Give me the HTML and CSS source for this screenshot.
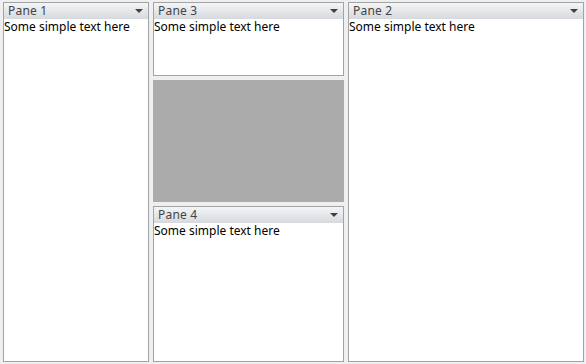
FILE: index.html
```html
<!DOCTYPE html>
<html lang="en">
<head>
    <title>Panes</title>
    <link rel="stylesheet" href="styles.css">
</head>
<body>

<div class="dock">
    <div class="pane pane-left">
        <div class="pane-header">
            <span>Pane 1</span>
            <span class="arrow"></span>
        </div>
        <div class="pane-body">Some simple text here</div>
    </div>

    <div class="column">
        <div class="pane pane-top">
            <div class="pane-header">
                <span>Pane 3</span>
                <span class="arrow"></span>
            </div>
            <div class="pane-body">Some simple text here</div>
        </div>
        <div class="filler"></div>
        <div class="pane pane-bottom">
            <div class="pane-header">
                <span>Pane 4</span>
                <span class="arrow"></span>
            </div>
            <div class="pane-body">Some simple text here</div>
        </div>
    </div>

    <div class="pane pane-right">
        <div class="pane-header">
            <span>Pane 2</span>
            <span class="arrow"></span>
        </div>
        <div class="pane-body">Some simple text here</div>
    </div>
</div>

</body>
</html>
```

FILE: styles.css
```css
body { margin: 0; padding: 2px 2px 2px 3px; background-color: #eeeff1; font-family: "Noto Sans", Arial, sans-serif; font-size: 12px; }
.dock { display: flex; gap: 4px; height: 360px; }
.pane { display: flex; flex-direction: column; border: 1px solid #a3a3a3; background: white; box-sizing: border-box; }
.pane-left { width: 146px; }
.pane-right { width: 236px; }
.column { display: flex; flex-direction: column; gap: 4px; width: 191px; }
.pane-top { height: 74px; }
.filler { height: 122px; background-color: #ababab; }
.pane-bottom { flex: 1; }
.pane-header { display: flex; justify-content: space-between; align-items: center; height: 16px; padding: 0 5px 0 4px; background: linear-gradient(#f4f5f7, #d6d9dd); color: #444; line-height: 16px; letter-spacing: 0.2px; }
.arrow { width: 0; height: 0; border-left: 4px solid transparent; border-right: 4px solid transparent; border-top: 4px solid #404040; }
.pane-body { padding: 0; color: black; line-height: 16px; }
```
